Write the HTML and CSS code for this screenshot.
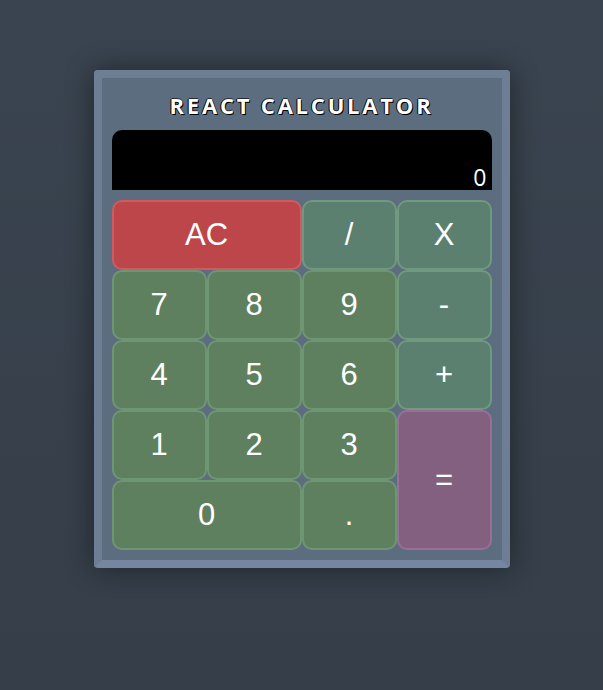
FILE: index.html
```html
<!DOCTYPE html>
<html lang="en">
<head>
<meta charset="utf-8">
<title>React Calculator</title>
<link rel="stylesheet" href="styles.css">
</head>
<body>
<div class="calc">
  <h1 class="title">REACT CALCULATOR</h1>
  <div class="display"><span class="value">0</span></div>
  <div class="keys">
    <button class="key clear wide">AC</button>
    <button class="key op">/</button>
    <button class="key op">X</button>
    <button class="key num">7</button>
    <button class="key num">8</button>
    <button class="key num">9</button>
    <button class="key op">-</button>
    <button class="key num">4</button>
    <button class="key num">5</button>
    <button class="key num">6</button>
    <button class="key op">+</button>
    <button class="key num">1</button>
    <button class="key num">2</button>
    <button class="key num">3</button>
    <button class="key eq tall">=</button>
    <button class="key num wide">0</button>
    <button class="key num">.</button>
  </div>
</div>
</body>
</html>
```
FILE: styles.css
```css
html, body {
  margin: 0;
  padding: 0;
  height: 100%;
}
body {
  background: linear-gradient(180deg, #3a4450 0%, #37404b 60%, #353e49 100%);
  display: flex;
  justify-content: center;
  align-items: flex-start;
  padding-top: 70px;
  box-sizing: border-box;
}
.calc {
  padding: 0 10px 10px;
  box-sizing: border-box;
  width: 416px;
  border: 8px solid #6d7e95;
  border-bottom-color: #7686a0;
  border-radius: 4px;
  background: #5d6d80;
  box-shadow: 0 0 28px rgba(0, 0, 0, 0.45);
}
.title {
  margin: 0;
  padding-top: 11px;
  height: 42px;
  line-height: 32px;
  box-sizing: border-box;
  margin-bottom: 10px;
  text-align: center;
  font-family: "Open Sans", "DejaVu Sans", sans-serif;
  font-weight: 700;
  font-size: 22px;
  letter-spacing: 2.8px;
  color: #ffffff;
  text-shadow: 1px 1px 0 #000, -1px 0 0 #000, 0 -1px 0 rgba(0,0,0,0.6);
}
.display {
  height: 60px;
  background: #000;
  border-radius: 10px 10px 0 0;
  display: flex;
  align-items: flex-end;
  justify-content: flex-end;
  padding: 0 5px 0 0;
}
.value {
  color: #fff;
  font-family: "Open Sans", "Liberation Sans", sans-serif;
  font-size: 23px;
  line-height: 24px;
  margin-bottom: 1px;
}
.keys {
  margin-top: 10px;
  display: grid;
  grid-template-columns: repeat(4, 95px);
  grid-template-rows: repeat(5, 70px);
}
.key {
  margin: 0;
  padding: 0;
  border: 2px solid;
  border-radius: 10px;
  color: #fff;
  font-family: "Liberation Sans", Arial, sans-serif;
  font-size: 31px;
  cursor: pointer;
}
.wide { grid-column: span 2; }
.tall { grid-row: span 2; }
.num {
  background: #5e805e;
  border-color: #6f9673;
}
.op {
  background: #5b806f;
  border-color: #70997f;
}
.clear {
  background: #bd464b;
  border-color: #cf5a60;
}
.eq {
  background: #835f80;
  border-color: #9a6f97;
}
```
